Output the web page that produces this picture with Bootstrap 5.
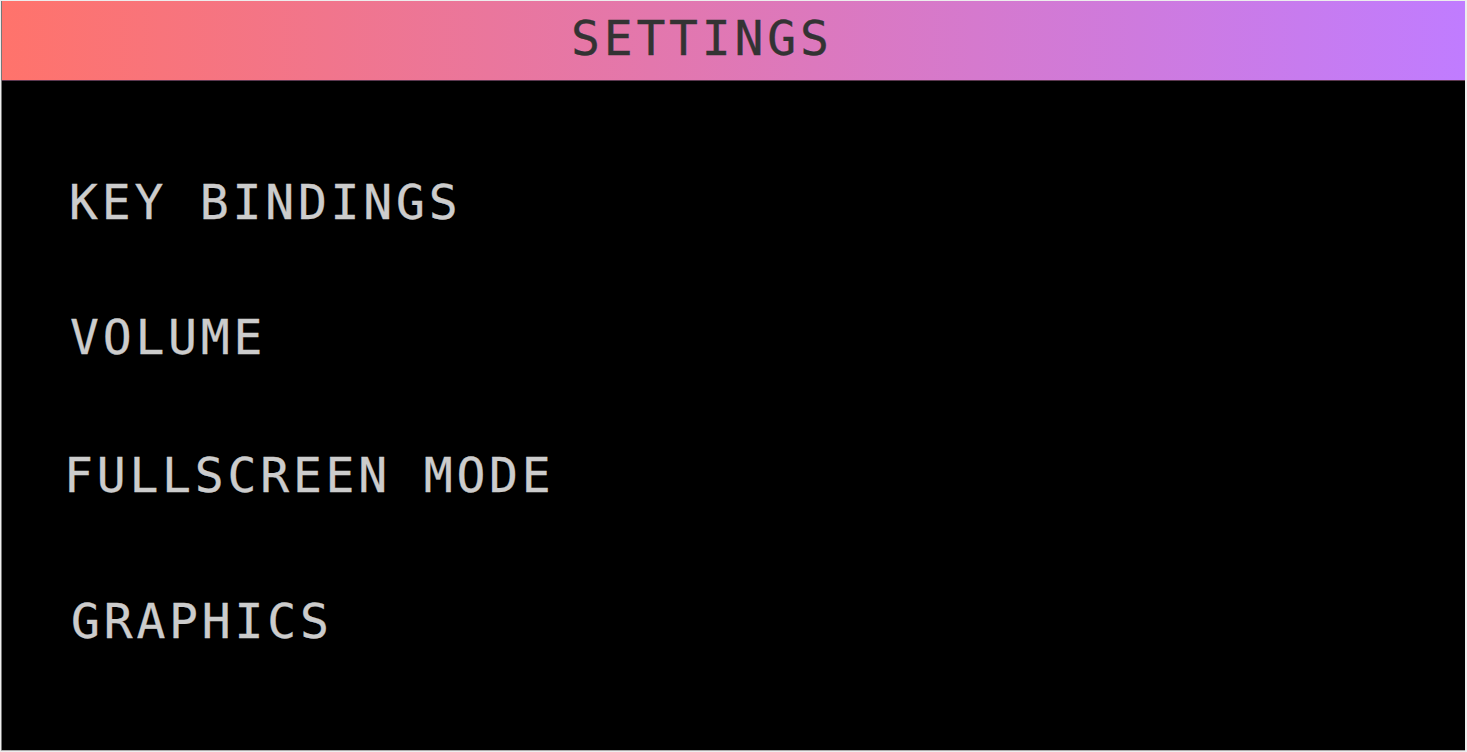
<!DOCTYPE html>
<html lang="en">
<head>
<meta charset="utf-8">
<meta name="viewport" content="width=device-width, initial-scale=1">
<title>Settings</title>
<link href="https://cdn.jsdelivr.net/npm/bootstrap@5.3.0/dist/css/bootstrap.min.css" rel="stylesheet">
<style>
body { background: #ededed; height: 752px; padding: 1px 2px 2px 1px; font-family: "OCR A Extended", "OCR A", "DejaVu Sans Mono", monospace; }
.screen { background: #000; border-left: 1px solid #777; box-shadow: 0 1px 0 #aaa; }
.title-bar { height: 80px; margin-left: -1px; padding: 19px 0 0 570px; background: linear-gradient(90deg, #ff736b, #c07cff); border-bottom: 1px solid #5c3850; }
.ocr-text { font-size: 48px; line-height: 36px; font-weight: 400; letter-spacing: 3.8px; white-space: pre; margin: 0; -webkit-text-stroke: .3px currentColor; }
.title-bar .ocr-text { color: #333; }
.option { color: #ccc; text-decoration: none; }
.options { padding: 103px 0 0 67px; }
.options li { height: 135px; }
.options li.volume { height: 138px; }
.options li.fullscreen { height: 146px; }
.options li.graphics { height: 36px; }
.volume .option { margin-left: 1px; }
.fullscreen .option { margin-left: -5px; }
.graphics .option { margin-left: 2px; }
</style>
</head>
<body>
<main class="screen h-100 overflow-hidden">
  <header class="title-bar position-relative"><h1 class="ocr-text">SETTINGS</h1></header>
  <nav>
    <ul class="options list-unstyled m-0">
      <li><a class="option ocr-text d-block" href="#">KEY BINDINGS</a></li>
      <li class="volume"><a class="option ocr-text d-block" href="#">VOLUME</a></li>
      <li class="fullscreen"><a class="option ocr-text d-block" href="#">FULLSCREEN MODE</a></li>
      <li class="graphics"><a class="option ocr-text d-block" href="#">GRAPHICS</a></li>
    </ul>
  </nav>
</main>
<script src="https://cdn.jsdelivr.net/npm/bootstrap@5.3.0/dist/js/bootstrap.bundle.min.js"></script>
</body>
</html>
